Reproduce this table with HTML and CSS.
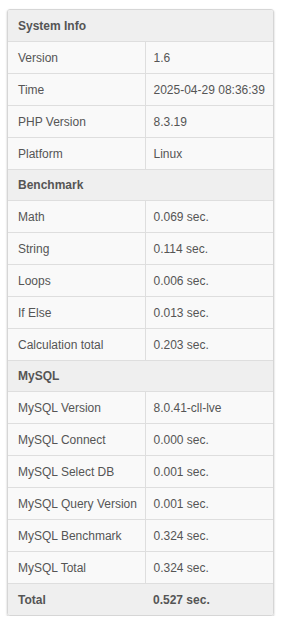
FILE: index.html
```html
<!DOCTYPE html>
<html>
<head>
<meta charset="utf-8">
<link rel="stylesheet" href="styles.css">
</head>
<body>
<div class="panel">
<table class="info">
<colgroup><col class="c1"><col class="c2"></colgroup>
<tr class="head first"><th colspan="2">System Info</th></tr>
<tr><td class="k">Version</td><td class="v">1.6</td></tr>
<tr><td class="k">Time</td><td class="v">2025-04-29 08:36:39</td></tr>
<tr><td class="k">PHP Version</td><td class="v">8.3.19</td></tr>
<tr><td class="k">Platform</td><td class="v">Linux</td></tr>
<tr class="head"><th colspan="2">Benchmark</th></tr>
<tr><td class="k">Math</td><td class="v">0.069 sec.</td></tr>
<tr><td class="k">String</td><td class="v">0.114 sec.</td></tr>
<tr><td class="k">Loops</td><td class="v">0.006 sec.</td></tr>
<tr><td class="k">If Else</td><td class="v">0.013 sec.</td></tr>
<tr><td class="k">Calculation total</td><td class="v">0.203 sec.</td></tr>
<tr class="head"><th colspan="2">MySQL</th></tr>
<tr><td class="k">MySQL Version</td><td class="v">8.0.41-cll-lve</td></tr>
<tr><td class="k">MySQL Connect</td><td class="v">0.000 sec.</td></tr>
<tr><td class="k">MySQL Select DB</td><td class="v">0.001 sec.</td></tr>
<tr><td class="k">MySQL Query Version</td><td class="v">0.001 sec.</td></tr>
<tr><td class="k">MySQL Benchmark</td><td class="v">0.324 sec.</td></tr>
<tr><td class="k">MySQL Total</td><td class="v">0.324 sec.</td></tr>
<tr class="total"><th class="k">Total</th><th class="v">0.527 sec.</th></tr>
</table>
</div>
</body>
</html>
```

FILE: styles.css
```css
html, body {
  margin: 0;
  padding: 0;
  background: #fff;
}
body {
  padding: 9px 0 0 7px;
  font-family: "Liberation Sans", Arial, sans-serif;
  font-size: 12px;
  color: #555;
}
.panel {
  width: 265px;
  border: 1px solid #d6d6d6;
  border-radius: 3px;
  box-shadow: 0 1px 2px rgba(0, 0, 0, 0.25);
  overflow: hidden;
}
.info {
  width: 100%;
  border-collapse: collapse;
  table-layout: fixed;
}
.c1 {
  width: 137px;
}
.info td, .info th {
  height: 31px;
  padding: 0 0 0 10px;
  text-align: left;
  vertical-align: middle;
  border-top: 1px solid #dedede;
  white-space: nowrap;
  overflow: hidden;
}
.info tr.first th {
  border-top: 0;
}
.info td {
  background: #f9f9f9;
  font-weight: normal;
}
.info td.k {
  border-right: 1px solid #dedede;
}
.info td.v {
  padding-left: 8px;
}
.head th {
  height: 30px;
  background: #efefef;
  font-weight: bold;
  color: #555;
}
.head.first th {
  height: 31px;
}
.total th {
  background: #efefef;
  font-weight: bold;
}
.total th.v {
  padding-left: 8px;
}
```
